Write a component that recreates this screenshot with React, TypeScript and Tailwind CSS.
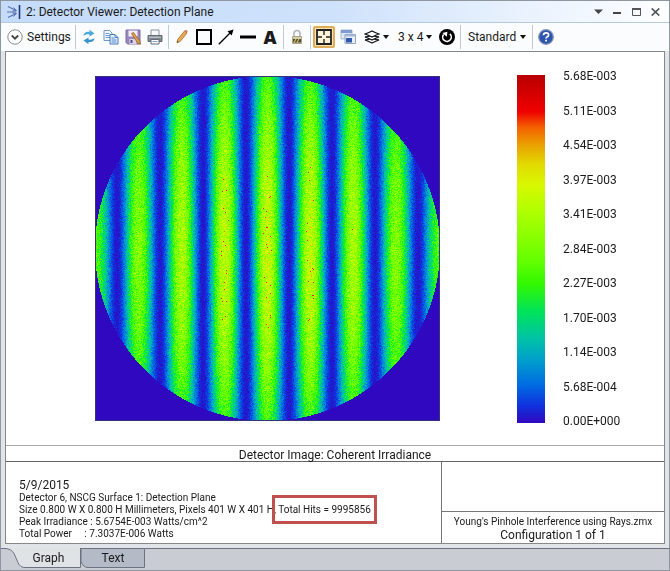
import { useLayoutEffect, useRef, useState } from "react";
import type { ReactNode } from "react";

const SIZE = 345;

// value (0..1) -> rgb, from cold to hot
const stops: [number, number, number, number][] = [
  [0, 48, 8, 192],
  [0.05, 16, 50, 222],
  [0.11, 0, 108, 226],
  [0.18, 0, 158, 204],
  [0.245, 0, 196, 164],
  [0.32, 0, 226, 90],
  [0.4, 50, 248, 0],
  [0.465, 100, 255, 0],
  [0.61, 176, 255, 0],
  [0.685, 216, 248, 0],
  [0.745, 226, 216, 0],
  [0.8, 234, 160, 0],
  [0.85, 244, 96, 0],
  [0.895, 240, 0, 0],
  [1, 184, 0, 0],
];

const scale = [
  "5.68E-003",
  "5.11E-003",
  "4.54E-003",
  "3.97E-003",
  "3.41E-003",
  "2.84E-003",
  "2.27E-003",
  "1.70E-003",
  "1.14E-003",
  "5.68E-004",
  "0.00E+000",
];

function colorAt(v: number) {
  const t = Math.min(1, Math.max(0, v));
  for (let i = 1; i < stops.length; i++) {
    if (t <= stops[i][0]) {
      const a = stops[i - 1];
      const b = stops[i];
      const k = (t - a[0]) / (b[0] - a[0]);
      return [1, 2, 3].map((c) => a[c] + (b[c] - a[c]) * k);
    }
  }
  return stops[stops.length - 1].slice(1);
}

const barGradient = `linear-gradient(to top, ${stops
  .map(([t, r, g, b]) => `rgb(${r},${g},${b}) ${t * 100}%`)
  .join(", ")})`;

function Fringes() {
  const ref = useRef<HTMLCanvasElement>(null);

  useLayoutEffect(() => {
    const ctx = ref.current?.getContext("2d");
    if (!ctx) return;
    const img = ctx.createImageData(SIZE, SIZE);
    let seed = 1977;
    const rand = () => {
      seed = (seed * 1664525 + 1013904223) >>> 0;
      return seed / 4294967296;
    };
    const mid = SIZE / 2;
    for (let y = 0; y < SIZE; y++) {
      for (let x = 0; x < SIZE; x++) {
        const dx = x + 0.5 - mid;
        const dy = y + 0.5 - mid;
        const r2 = (dx * dx + dy * dy) / (mid * mid);
        let v = 0;
        if (r2 <= 1) {
          const wave = Math.cos((Math.PI * dx) / 43) ** 2;
          const mean = 0.63 * (1 - 0.36 * r2) * wave + 0.02;
          // roughly gaussian shot noise
          const noise = rand() + rand() + rand() + rand() - 2;
          v = mean + noise * 0.13 * Math.sqrt(mean);
          // a few hot pixels near the centre
          if (mean > 0.58 && rand() > 0.985) v = 0.88;
        }
        const [r, g, b] = colorAt(v);
        const i = (y * SIZE + x) * 4;
        img.data[i] = r;
        img.data[i + 1] = g;
        img.data[i + 2] = b;
        img.data[i + 3] = 255;
      }
    }
    ctx.putImageData(img, 0, 0);
  }, []);

  return (
    <canvas
      ref={ref}
      width={SIZE}
      height={SIZE}
      role="img"
      aria-label="Coherent irradiance"
      className="block shrink-0 outline outline-1 -outline-offset-1 outline-[#34347a]"
    />
  );
}

function Tool({ label, children }: { label: string; children: ReactNode }) {
  return (
    <button type="button" aria-label={label} className="flex h-[22px] w-[22px] shrink-0 items-center justify-center">
      {children}
    </button>
  );
}

function Sep() {
  return <span className="mx-[2px] h-6 w-px shrink-0 bg-[#c3cad4]" />;
}

function Caret() {
  return (
    <svg width="6" height="4" viewBox="0 0 6 4" className="shrink-0">
      <path d="M0 0h6L3 4z" fill="#111" />
    </svg>
  );
}

function Picker({ label, value, width }: { label: string; value: string; width: string }) {
  return (
    <span className={`relative flex h-[22px] shrink-0 items-center ${width}`}>
      <select aria-label={label} defaultValue={value} className="h-full w-full appearance-none bg-transparent pl-[5px] text-xs">
        <option>{value}</option>
      </select>
      <span className="pointer-events-none absolute right-[4px]">
        <Caret />
      </span>
    </span>
  );
}

function TitleBar() {
  return (
    <header className="flex h-[22px] items-center bg-linear-to-r from-[#c4dcfa] via-[#cfe2fb] to-[#fdfeff] border-b border-[#b4c8de] pl-[6px] pr-[4px]">
      <svg width="14" height="16" viewBox="0 0 14 16" fill="none" className="shrink-0">
        <path d="M12.500 1v14" stroke="#27357c" strokeWidth="1.6" />
        <path d="M1 2.500l8 4M0 8h9M1 13.500l8-4" stroke="#5a70b0" strokeWidth="1.1" />
        <path d="M6.500 3.500l3 3.200-4 .2M6.500 12.500l3-3.200-4-.2" stroke="#5a70b0" strokeWidth="1" />
      </svg>
      <h1 className="ml-[5px] flex-1 text-xs">2: Detector Viewer: Detection Plane</h1>
      <div className="flex">
        <button type="button" aria-label="Window menu" className="flex h-5 w-[19px] items-center justify-center">
          <svg width="9" height="5" viewBox="0 0 9 5"><path d="M0 .5h9L4.500 5z" fill="#444" /></svg>
        </button>
        <button type="button" aria-label="Minimize" className="flex h-5 w-[19px] items-center justify-center">
          <svg width="9" height="9" viewBox="0 0 9 9"><path d="M0 5h8v2H0z" fill="#444" /></svg>
        </button>
        <button type="button" aria-label="Maximize" className="flex h-5 w-[19px] items-center justify-center">
          <svg width="10" height="8" viewBox="0 0 10 8" fill="none">
            <path d="M.5 1v6.500h8V1" stroke="#555" />
            <path d="M0 1h9" stroke="#555" strokeWidth="2" />
          </svg>
        </button>
        <button type="button" aria-label="Close" className="flex h-5 w-[19px] items-center justify-center">
          <svg width="9" height="8" viewBox="0 0 9 8"><path d="M.7.4l7.600 7.200M8.300.4L.7 7.600" stroke="#555" strokeWidth="1.6" /></svg>
        </button>
      </div>
    </header>
  );
}

function Toolbar() {
  return (
    <div role="toolbar" className="flex h-7 items-center bg-[#fbfcfe] pl-[6px]">
      <button type="button" className="flex w-[66px] shrink-0 items-center gap-1 text-xs">
        <svg width="16" height="16" viewBox="0 0 16 16" fill="none" className="shrink-0">
          <circle cx="8" cy="8" r="7.200" fill="#fff" stroke="#8a8a8a" />
          <path d="M4.800 6.500L8 9.700l3.200-3.200" stroke="#444" strokeWidth="1.800" />
        </svg>
        Settings
      </button>
      <Sep />
      <Tool label="Refresh">
        <svg width="14" height="16" viewBox="0 0 14 16">
          <path d="M1.500 7C1.500 4 4 2.300 7.500 3V.8L12.500 4.500 7.500 7.600V5.500C5 5 3.500 5.500 1.500 7z" fill="#4aa9dc" />
          <path d="M12.500 9c0 3-2.500 4.700-6 4v2.200L1.500 11.500l5-3.100v2.100c2.500.5 4 0 6-1.500z" fill="#3a93cc" />
        </svg>
      </Tool>
      <Tool label="Copy">
        <svg width="16" height="16" viewBox="0 0 16 16" fill="none">
          <path d="M1 1.500h5.500L9 4v7.500H1z" fill="#f4f9ff" stroke="#6f96c8" />
          <path d="M2.500 4.500h4M2.500 6.500h5M2.500 8.500h5" stroke="#6b9ad6" />
          <path d="M7 5.500h5l3 3V15H7z" fill="#e9f3ff" stroke="#4777b6" />
          <path d="M12 5.500v3h3M8.500 9h3M8.500 11h5M8.500 13h5" stroke="#4b84cc" />
        </svg>
      </Tool>
      <Tool label="Save">
        <svg width="16" height="16" viewBox="0 0 16 16">
          <path d="M1 1h14v14H2.500L1 13.500z" fill="#9a86bd" stroke="#7d6da6" />
          <path d="M3.500 1.500h9v6h-9z" fill="#f1edf7" />
          <path d="M4.500 10h7v5h-7z" fill="#d9d4e6" />
          <path d="M5.500 11h2v3h-2z" fill="#5b4c80" />
          <path d="M6.500 4.500l2-1 6.500 9 .3 2.800-2.500-1.200z" fill="#e3a04a" stroke="#9a5f24" strokeWidth=".8" />
        </svg>
      </Tool>
      <Tool label="Print">
        <svg width="16" height="16" viewBox="0 0 16 16">
          <path d="M4 1h8v6H4z" fill="#f7f9fb" stroke="#8b939c" />
          <path d="M1 6.500h14v6H1z" fill="#82888f" stroke="#666c73" />
          <path d="M2 7.500h12v1.500H2z" fill="#b7bdc4" />
          <path d="M4 10.500h8V15H4z" fill="#fff" stroke="#666c73" />
          <path d="M5.500 12.500h5" stroke="#78a8d8" />
          <path d="M12.500 7.500h1v1h-1z" fill="#4ab04a" />
        </svg>
      </Tool>
      <Sep />
      <Tool label="Pencil">
        <svg width="14" height="16" viewBox="0 0 14 16">
          <path d="M2 13.800l.7-3.300L9.500 2l2.500 2-6.800 8.400z" fill="#e9a94e" stroke="#a66a2b" strokeWidth=".8" />
          <path d="M9.500 2l.8-.9q1.200-.4 2.300.9L12 4z" fill="#c77a62" />
          <path d="M2 13.800l.4-1.800 1.200 1z" fill="#333" />
        </svg>
      </Tool>
      <Tool label="Rectangle">
        <svg width="16" height="16" viewBox="0 0 16 16"><path d="M1 1h14v14H1z" fill="none" stroke="#000" strokeWidth="2" /></svg>
      </Tool>
      <Tool label="Arrow">
        <svg width="16" height="16" viewBox="0 0 16 16">
          <path d="M.8 15.200L12 4" stroke="#000" strokeWidth="1.300" />
          <path d="M15.500.5l-1.800 6L9.500 2.300z" />
        </svg>
      </Tool>
      <Tool label="Line">
        <svg width="16" height="16" viewBox="0 0 16 16"><path d="M0 8h16" stroke="#000" strokeWidth="3" /></svg>
      </Tool>
      <Tool label="Text">
        <span className="font-['Open_Sans'] text-lg leading-none font-extrabold">A</span>
      </Tool>
      <Sep />
      <Tool label="Lock">
        <svg width="12" height="16" viewBox="0 0 12 16">
          <path d="M3 8V4.500a3 3 0 0 1 6 0V8" fill="none" stroke="#b3b3b3" strokeWidth="1.600" />
          <path d="M1.500 7.500h9v7h-9z" fill="#d6cfa4" stroke="#a9a58c" />
          <path d="M2 10h8v3.500H2z" fill="#4c4a3a" />
          <path d="M3 13.500l2-3.500M6 13.500L8 10" stroke="#d8c256" strokeWidth="1.200" />
        </svg>
      </Tool>
      <Sep />
      <button type="button" aria-label="Fit window" aria-pressed="true" className="flex h-[22px] w-[22px] shrink-0 items-center justify-center rounded-[2px] border-2 border-[#dcae5c] bg-[#fbe3ae]">
        <svg width="16" height="16" viewBox="0 0 16 16" fill="none" className="shrink-0">
          <path d="M1 1h14v14H1z" fill="#fdf3d8" stroke="#222" strokeWidth="1.800" />
          <path d="M8 2v4M8 10v4M2 8h4M10 8h4" stroke="#222" strokeWidth="1.400" />
        </svg>
      </button>
      <span className="ml-[2px]">
        <Tool label="Clone window">
          <svg width="16" height="16" viewBox="0 0 16 16">
            <path d="M1 1h11v9H1z" fill="#dce6f3" stroke="#a9b9cd" />
            <path d="M1 1h11v3H1z" fill="#7f9ccf" />
            <path d="M5 5.500h10.500v9H5z" fill="#e9eff7" stroke="#93a4bd" />
            <path d="M5 5.500h10.500v2H5z" fill="#a3b8dc" />
            <path d="M6 9h6v4.500H6z" fill="#2f58b0" />
          </svg>
        </Tool>
      </span>
      <button type="button" aria-label="Layers" className="flex h-[22px] w-[34px] shrink-0 items-center gap-[3px] pl-[5px]">
        <svg width="16" height="14" viewBox="0 0 16 14" fill="#fff" stroke="#111" strokeWidth="1.300">
          <path d="M1 10q3 0 7-2 4 2 7 2-3 1-7 3-4-2-7-3z" />
          <path d="M1 7q3 0 7-2 4 2 7 2-3 1-7 3-4-2-7-3z" />
          <path d="M1 4q3-1 7-3 4 2 7 3-3 1-7 3-4-2-7-3z" />
        </svg>
        <Caret />
      </button>
      <Picker label="Aspect" value="3 x 4" width="w-[43px]" />
      <Tool label="Reset">
        <svg width="16" height="16" viewBox="0 0 16 16">
          <circle cx="8" cy="8" r="8" />
          <path d="M10.800 4.800A4.300 4.300 0 1 1 4.600 5.400" fill="none" stroke="#fff" strokeWidth="1.600" />
          <path d="M3.400 4l5-1.200-.6 5z" fill="#fff" />
        </svg>
      </Tool>
      <Sep />
      <Picker label="Line style" value="Standard" width="w-[67px]" />
      <Sep />
      <Tool label="Help">
        <svg width="16" height="16" viewBox="0 0 16 16">
          <circle cx="8" cy="8" r="7.300" fill="#2e56ae" stroke="#8795b4" strokeWidth="1.200" />
          <path d="M5.400 6.300q.2-2.500 2.700-2.500t2.500 2.100q0 1.200-1.300 1.900-1.200.6-1.200 1.800" fill="none" stroke="#fff" strokeWidth="1.700" />
          <path d="M7.200 10.800h1.800v1.800H7.200z" fill="#fff" />
        </svg>
      </Tool>
    </div>
  );
}

function Report() {
  return (
    <section className="flex flex-1 flex-col border border-[#85878b] bg-white">
      <div className="flex h-[393px] items-center pl-[89px]">
        <Fringes />
        <div className="ml-[77px] h-[348px] w-7 shrink-0" style={{ background: barGradient }} />
        <ul className="ml-[18px] flex h-[361px] flex-col justify-between text-xs">
          {scale.map((s) => (
            <li key={s}>{s}</li>
          ))}
        </ul>
      </div>
      <h2 className="h-[17px] border-y border-t-[#a9a9a9] border-b-[#666] pt-px text-center text-xs leading-4">
        Detector Image: Coherent Irradiance
      </h2>
      <div className="flex flex-1">
        <div className="flex-1 pl-[13px] pt-4 text-[10px] leading-3">
          <p className="text-xs leading-[14px]">5/9/2015</p>
          <p>Detector 6, NSCG Surface 1: Detection Plane</p>
          <p>
            Size 0.800 W X 0.800 H Millimeters, Pixels 401 W X 401 H,{" "}
            <span className="relative">
              Total Hits = 9995856
              <span className="absolute -inset-x-[6px] -inset-y-[9px] border-3 border-[#c0504d]" />
            </span>
          </p>
          <p className="whitespace-pre">Peak Irradiance : 5.6754E-003 Watts/cm^2</p>
          <p className="whitespace-pre">Total Power     : 7.3037E-006 Watts</p>
        </div>
        <div className="flex w-[223px] flex-col border-l border-[#777] text-center">
          <div className="flex-1 border-b border-[#777]" />
          <p className="pt-1 text-[10px] leading-3">Young's Pinhole Interference using Rays.zmx</p>
          <p className="text-xs leading-[15px]">Configuration 1 of 1</p>
        </div>
      </div>
    </section>
  );
}

function Tabs() {
  const [tab, setTab] = useState("Graph");
  return (
    <div role="tablist" className="flex h-[22px] bg-[#c9ccd2] text-xs">
      <button type="button" role="tab" aria-selected={tab === "Graph"} onClick={() => setTab("Graph")} className="relative h-5 w-20 pl-[15px]">
        <svg width="80" height="20" viewBox="0 0 80 20" className="absolute inset-0">
          <path d="M0 0h80v19.500H24q-5 0-7-5l-4-9Q10 .5 4 .5H0z" fill="#dfe3e6" />
          <path d="M0 .5h4q6 0 9 5l4 9q2 5 7 5h55.500V0" fill="none" stroke="#6b7280" />
        </svg>
        <span className="relative">Graph</span>
      </button>
      <button type="button" role="tab" aria-selected={tab === "Text"} onClick={() => setTab("Text")} className="relative h-5 w-16">
        <svg width="64" height="20" viewBox="0 0 64 20" className="absolute inset-0">
          <path d="M0 .5h63.500v19H7q-5 0-7-6z" fill="#b4bac6" stroke="#6b7280" />
        </svg>
        <span className="relative">Text</span>
      </button>
      <span className="flex-1 border-t border-[#6b7280]" />
    </div>
  );
}

export default function App() {
  return (
    <div className="flex min-h-screen flex-col border border-[#8f969e] bg-[#e1e5ea] font-[Roboto,'Open_Sans',sans-serif] leading-4 text-[#1a1a1a]">
      <TitleBar />
      <Toolbar />
      <main className="flex flex-1 flex-col px-1 pb-1">
        <Report />
      </main>
      <Tabs />
    </div>
  );
}
